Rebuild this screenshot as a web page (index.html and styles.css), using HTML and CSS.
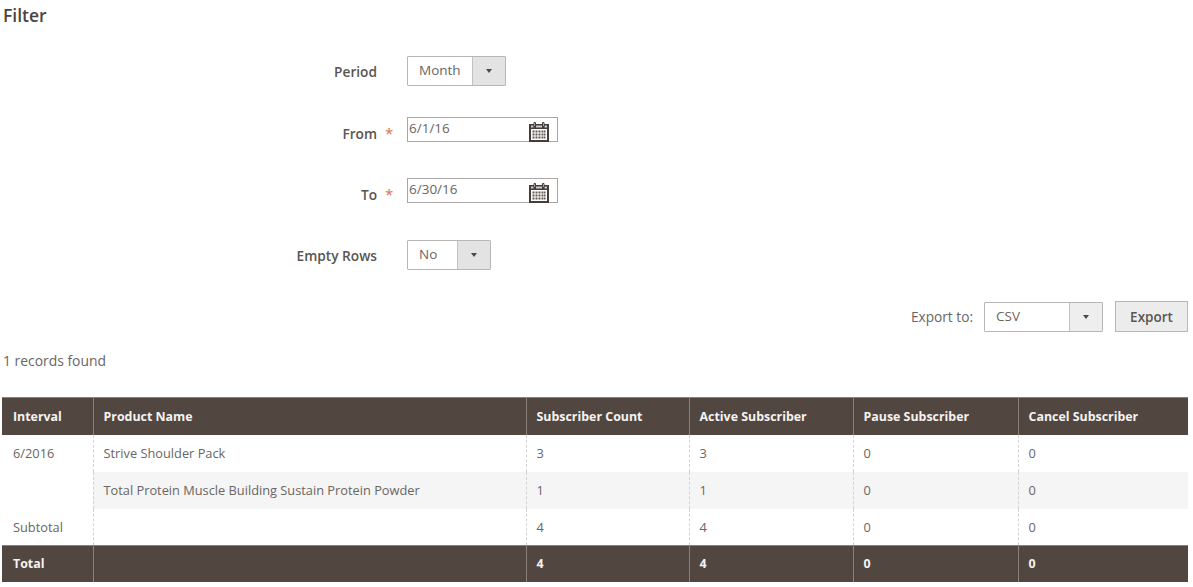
FILE: index.html
```html
<!DOCTYPE html>
<html lang="en">
<head>
<meta charset="utf-8">
<title>Subscribers report</title>
<link rel="stylesheet" href="styles.css">
</head>
<body>
<h1 class="title">Filter</h1>
<form class="filter">
  <div class="row">
    <label class="label">Period</label>
    <span class="star"></span>
    <div class="select select-period"><span class="value">Month</span><span class="arrow"><i class="caret"></i></span></div>
  </div>
  <div class="row">
    <label class="label label-low">From</label>
    <span class="star label-low">*</span>
    <div class="date"><span>6/1/16</span>
      <svg class="cal" viewBox="0 0 20 20" width="20" height="20"><path fill="#453d38" d="M0 2h20v18H0z"/><path fill="#fff" d="M2 7h16v11H2z"/><path fill="#cfcbc7" d="M2 3.500h2.500V5.500H2zM7 3.500h6V5.500H7zM15.500 3.500H18V5.500h-2.500z"/><path fill="#fff" stroke="#453d38" d="M5 .5h1.500v4H5zM13.500 .5H15v4h-1.500z"/><path fill="#5e5752" d="M3.500 8.500h2v2h-2zM6.500 8.500h2v2h-2zM9.500 8.500h2v2h-2zM12.500 8.500h2v2h-2zM15 8.500h1.500v2H15zM3.500 11.500h2v2h-2zM6.500 11.500h2v2h-2zM9.500 11.500h2v2h-2zM12.500 11.500h2v2h-2zM15 11.500h1.500v2H15zM3.500 14.500h2v2h-2zM6.500 14.500h2v2h-2zM9.500 14.500h2v2h-2zM12.500 14.500h2v2h-2zM15 14.500h1.500v2H15z"/></svg>
    </div>
  </div>
  <div class="row row-to">
    <label class="label label-low">To</label>
    <span class="star label-low">*</span>
    <div class="date"><span>6/30/16</span>
      <svg class="cal" viewBox="0 0 20 20" width="20" height="20"><path fill="#453d38" d="M0 2h20v18H0z"/><path fill="#fff" d="M2 7h16v11H2z"/><path fill="#cfcbc7" d="M2 3.500h2.500V5.500H2zM7 3.500h6V5.500H7zM15.500 3.500H18V5.500h-2.500z"/><path fill="#fff" stroke="#453d38" d="M5 .5h1.500v4H5zM13.500 .5H15v4h-1.500z"/><path fill="#5e5752" d="M3.500 8.500h2v2h-2zM6.500 8.500h2v2h-2zM9.500 8.500h2v2h-2zM12.500 8.500h2v2h-2zM15 8.500h1.500v2H15zM3.500 11.500h2v2h-2zM6.500 11.500h2v2h-2zM9.500 11.500h2v2h-2zM12.500 11.500h2v2h-2zM15 11.500h1.500v2H15zM3.500 14.500h2v2h-2zM6.500 14.500h2v2h-2zM9.500 14.500h2v2h-2zM12.500 14.500h2v2h-2zM15 14.500h1.500v2H15z"/></svg>
    </div>
  </div>
  <div class="row">
    <label class="label">Empty Rows</label>
    <span class="star"></span>
    <div class="select select-empty"><span class="value">No</span><span class="arrow"><i class="caret"></i></span></div>
  </div>
</form>
<div class="export">
  <span class="export-label">Export to:</span>
  <div class="select select-csv"><span class="value">CSV</span><span class="arrow"><i class="caret"></i></span></div>
  <button type="button" class="export-btn">Export</button>
</div>
<p class="records">1 records found</p>
<table class="grid">
  <colgroup><col class="c1"><col class="c2"><col class="c3"><col class="c4"><col class="c5"><col class="c6"></colgroup>
  <thead>
    <tr><th>Interval</th><th>Product Name</th><th>Subscriber Count</th><th>Active Subscriber</th><th>Pause Subscriber</th><th>Cancel Subscriber</th></tr>
  </thead>
  <tbody>
    <tr><td>6/2016</td><td>Strive Shoulder Pack</td><td>3</td><td>3</td><td>0</td><td>0</td></tr>
    <tr class="alt"><td class="plain"></td><td>Total Protein Muscle Building Sustain Protein Powder</td><td>1</td><td>1</td><td>0</td><td>0</td></tr>
    <tr><td>Subtotal</td><td></td><td>4</td><td>4</td><td>0</td><td>0</td></tr>
  </tbody>
  <tfoot>
    <tr><th>Total</th><th></th><th>4</th><th>4</th><th>0</th><th>0</th></tr>
  </tfoot>
</table>
</body>
</html>
```
FILE: styles.css
```css
* { box-sizing: border-box; }
html, body { margin: 0; padding: 0; }
body {
  background: #fff;
  color: #4f4a46;
  font-family: "Open Sans", "Noto Sans", sans-serif;
  font-size: 12px;
  width: 1193px;
  height: 587px;
  overflow: hidden;
}
.title {
  margin: 0;
  padding: 5px 0 0 3px;
  height: 56px;
  font-size: 17.500px;
  line-height: 20px;
  font-weight: 600;
  color: #4a4541;
}
.filter { display: flex; flex-direction: column; gap: 31px; }
.row { display: flex; align-items: flex-start; height: 30px; }
.row-to { height: 31px; }
.label {
  width: 377px;
  padding-top: 1px;
  text-align: right;
  font-size: 13.700px;
  font-weight: 600;
  line-height: 30px;
  color: #5a5551;
}
.label.label-low { padding-top: 2px; }
.star {
  width: 30px;
  padding-left: 8px;
  color: #d9704e;
  font-size: 15px;
  line-height: 33px;
}
.select {
  display: flex;
  height: 30px;
  background: #fff;
  border: 1px solid #b9b7b5;
  border-radius: 1px;
}
.select-period { width: 99px; }
.select-empty { width: 84px; }
.select-csv { width: 119px; }
.value {
  flex: 1;
  padding-left: 11px;
  font-size: 13.500px;
  line-height: 26px;
  color: #6a6663;
}
.arrow {
  width: 33px;
  display: flex;
  align-items: center;
  justify-content: center;
  background: #e3e3e3;
  border-left: 1px solid #c4c2c0;
}
.select-csv .arrow { background: #eeeeee; }
.caret {
  width: 0;
  height: 0;
  border-left: 3.500px solid transparent;
  border-right: 3.500px solid transparent;
  border-top: 4px solid #4d4845;
}
.date {
  position: relative;
  width: 151px;
  height: 25px;
  padding-left: 1px;
  border: 1px solid #a9a7a5;
  font-size: 13.500px;
  line-height: 20px;
  color: #6a6663;
}
.cal { position: absolute; right: 8px; top: 4px; }
.export {
  display: flex;
  align-items: center;
  justify-content: flex-end;
  margin-top: 31px;
  padding-right: 5px;
  height: 31px;
}
.export-label { margin-right: 11px; font-size: 13.700px; color: #6a6663; }
.export-btn {
  width: 73px;
  height: 31px;
  margin-left: 12px;
  padding: 0;
  background: #ececec;
  border: 1px solid #b9b7b5;
  font-family: inherit;
  font-size: 13.500px;
  font-weight: 600;
  color: #5a5552;
}
.records {
  margin: 20px 0 0 3px;
  height: 45px;
  font-size: 13.900px;
  line-height: 18px;
  color: #6a6663;
}
.grid {
  width: 1186px;
  margin-left: 2px;
  border-collapse: collapse;
  table-layout: fixed;
  font-size: 12.800px;
}
.c1 { width: 91px; }
.c2 { width: 433px; }
.c3 { width: 163px; }
.c4 { width: 164px; }
.c5 { width: 165px; }
.c6 { width: 170px; }
.grid th {
  height: 37px;
  padding: 0 10px;
  background: #514740;
  color: #f5f3f1;
  font-weight: 700;
  font-size: 12.400px;
  text-align: left;
  border-left: 1px solid #8a817b;
}
.grid th:first-child { border-left: 0; padding-left: 11px; }
.grid thead th { height: 37px; border-top: 1px solid #8a817b; }
.grid td {
  height: 37px;
  padding: 0 10px;
  color: #6a6663;
  border-left: 1px dashed #d5d3d1;
}
.grid td:first-child { border-left: 0; padding-left: 11px; }
.grid .alt td { background: #f5f5f5; }
.grid .alt td.plain { background: #fff; }
.grid tfoot th { height: 36px; border-top: 1px solid #8a817b; }
```
